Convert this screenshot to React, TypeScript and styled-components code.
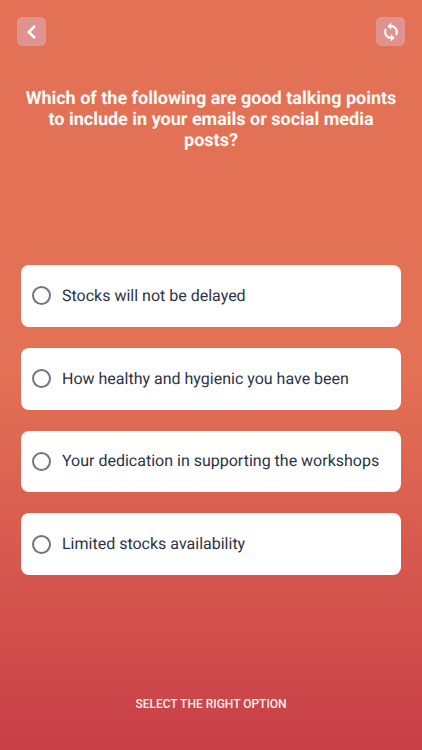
import React, { useState } from "react";
import styled, { createGlobalStyle } from "styled-components";

const GlobalStyle = createGlobalStyle`
  *, *::before, *::after { box-sizing: border-box; }
  body { margin: 0; font-family: Roboto, sans-serif; text-rendering: geometricPrecision; }
`;

const Screen = styled.main`
  display: flex;
  flex-direction: column;
  min-height: 100vh;
  padding: 17px 0 36px;
  background: linear-gradient(#e37155 0%, #e37155 50%, #c83f47 100%);
`;

const Toolbar = styled.header`
  display: flex;
  justify-content: space-between;
  padding: 0 17px;
`;

const IconButton = styled.button`
  display: flex;
  align-items: center;
  justify-content: center;
  width: 29px;
  height: 29px;
  padding: 0;
  border: 1px solid #e2958c;
  border-radius: 5px;
  background: #e0938e;
  color: #ffffff;
  cursor: pointer;
`;

const Quiz = styled.form`
  display: flex;
  flex-direction: column;
  flex: 1;
`;

const Question = styled.h1`
  min-height: 136px;
  margin: 42px 20px 41px;
  color: #fffaf5;
  font-size: 18px;
  font-weight: 700;
  line-height: 21px;
  text-align: center;
`;

const Options = styled.div`
  display: grid;
  grid-auto-rows: 1fr;
  gap: 21px;
  min-height: 310px;
  margin: 0 21px;
`;

const Option = styled.label`
  display: flex;
  align-items: center;
  gap: 11px;
  padding: 8px 11px;
  border-radius: 8px;
  background: #ffffff;
  color: #2b3344;
  font-size: 16px;
  line-height: 20px;
  cursor: pointer;
`;

const Radio = styled.input`
  appearance: none;
  flex: none;
  width: 19px;
  height: 19px;
  margin: 0;
  border: 2px solid #757575;
  border-radius: 50%;
  cursor: pointer;

  &:checked {
    background: radial-gradient(circle, #c83f47 0 5px, transparent 6px);
    border-color: #c83f47;
  }
`;

const Submit = styled.button`
  align-self: center;
  margin-top: auto;
  padding: 0;
  border: 0;
  background: none;
  color: #fdeeee;
  font: 500 12px/20px Roboto, sans-serif;
  text-transform: uppercase;
  cursor: pointer;
`;

const BackIcon = () => (
  <svg width="16" height="16" viewBox="0 0 16 16" fill="none" aria-hidden="true">
    <path d="M11 1.8L4.8 8l6.2 6.2" stroke="currentColor" strokeWidth="2.6" />
  </svg>
);

const RestartIcon = () => (
  <svg
    width="20"
    height="20"
    viewBox="0 0 24 24"
    fill="currentColor"
    stroke="currentColor"
    strokeWidth="0.5"
    aria-hidden="true"
  >
    <path d="M12 4V1L8 5l4 4V6c3.31 0 6 2.69 6 6 0 1.01-.25 1.97-.7 2.8l1.46 1.46A7.93 7.93 0 0 0 20 12c0-4.42-3.58-8-8-8z" />
    <path d="M12 18c-3.31 0-6-2.69-6-6 0-1.01.25-1.97.7-2.8L5.24 7.74A7.93 7.93 0 0 0 4 12c0 4.42 3.58 8 8 8v3l4-4-4-4v3z" />
  </svg>
);

const options = [
  "Stocks will not be delayed",
  "How healthy and hygienic you have been",
  "Your dedication in supporting the workshops",
  "Limited stocks availability",
];

export default function App() {
  const [selected, setSelected] = useState<string | null>(null);

  return (
    <Screen>
      <GlobalStyle />
      <Toolbar>
        <IconButton type="button" aria-label="Back">
          <BackIcon />
        </IconButton>
        <IconButton type="button" aria-label="Restart" onClick={() => setSelected(null)}>
          <RestartIcon />
        </IconButton>
      </Toolbar>
      <Quiz onSubmit={(event) => event.preventDefault()}>
        <Question id="question">
          Which of the following are good talking points to include in your emails or social media posts?
        </Question>
        <Options role="radiogroup" aria-labelledby="question">
          {options.map((option) => (
            <Option key={option}>
              <Radio
                type="radio"
                name="answer"
                value={option}
                checked={selected === option}
                onChange={() => setSelected(option)}
              />
              {option}
            </Option>
          ))}
        </Options>
        <Submit type="submit">Select the right option</Submit>
      </Quiz>
    </Screen>
  );
}
